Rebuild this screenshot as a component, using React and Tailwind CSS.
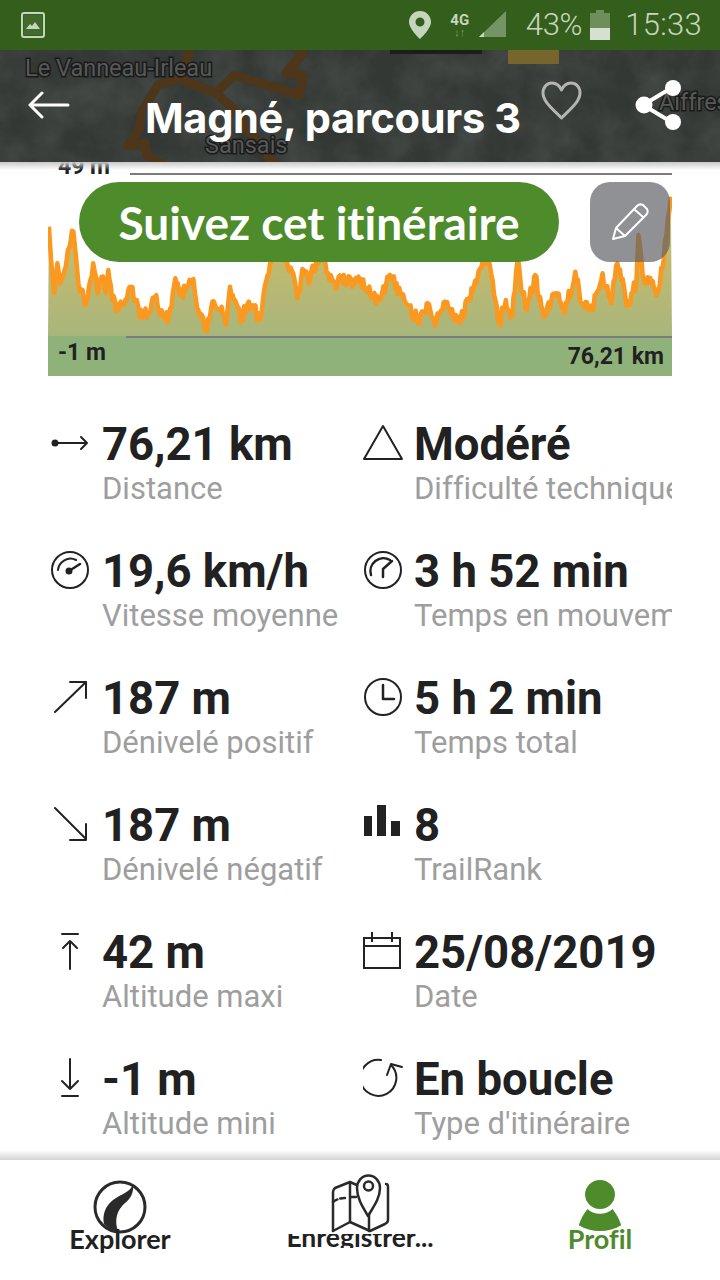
import React from "react";

// profile outline read off the screenshot (x, y in chart px)
const keys = [[45,200],[50,300],[58,400],[65,310],[72,370],[85,320],[90,270],[103,215],[110,300],[115,370],[125,390],[130,435],[140,380],[150,310],[160,400],[170,350],[180,400],[186,330],[195,420],[210,450],[230,420],[240,380],[250,420],[260,470],[280,460],[300,405],[310,465],[330,470],[345,355],[360,400],[385,360],[400,450],[420,515],[430,445],[455,440],[465,495],[475,380],[490,430],[500,485],[520,425],[548,480],[555,400],[570,310],[580,250],[610,300],[625,340],[635,415],[650,330],[665,360],[680,300],[690,280],[705,340],[730,370],[745,345],[765,380],[780,350],[800,395],[830,420],[855,345],[880,400],[925,490],[945,430],[965,485],[985,425],[1020,490],[1040,420],[1060,370],[1075,300],[1090,300],[1105,420],[1115,490],[1130,420],[1145,470],[1158,300],[1170,400],[1180,450],[1200,345],[1220,470],[1250,400],[1270,460],[1295,335],[1310,430],[1335,450],[1360,340],[1380,430],[1395,310],[1420,435],[1440,370],[1445,225],[1455,340],[1470,370],[1490,395],[1505,300],[1522,110]];

let seed = 17;
const rnd = () => {
  seed = (seed * 1103 + 12345) % 65536;
  return seed / 65536;
};

const line = [];
keys.forEach(([zx, zy], i) => {
  const x = zx / 2.375 - 18;
  const y = zy / 3 - 2;
  line.push([x, y]);
  const next = keys[i + 1];
  if (next && next[0] - zx > 8) {
    const nx = next[0] / 2.375 - 18;
    const ny = next[1] / 3 - 2;
    const steps = Math.max(2, Math.floor((nx - x) / 1.2));
    for (let s = 1; s < steps; s++) {
      const t = s / steps;
      line.push([x + (nx - x) * t, y + (ny - y) * t + (rnd() - 0.5) * 14]);
    }
  }
});
const lineD = line.map(([x, y], i) => `${i ? "L" : "M"}${x.toFixed(1)} ${y.toFixed(1)}`).join(" ");
const fillD = `${lineD} L624 174 L0 174 Z`;

const stats = [
  ["dist", "76,21 km", "Distance", "time", "Modéré", "Difficulté technique"],
  ["gauge", "19,6 km/h", "Vitesse moyenne", "gauge2", "3 h 52 min", "Temps en mouvement"],
  ["up", "187 m", "Dénivelé positif", "clock", "5 h 2 min", "Temps total"],
  ["down", "187 m", "Dénivelé négatif", "bars", "8", "TrailRank"],
  ["max", "42 m", "Altitude maxi", "cal", "25/08/2019", "Date"],
  ["min", "-1 m", "Altitude mini", "loop", "En boucle", "Type d'itinéraire"],
];

function StatIcon({ name }) {
  const common = { fill: "none", stroke: "#222", strokeWidth: 2, strokeLinecap: "round", strokeLinejoin: "round" };
  return (
    <svg width="44" height="44" viewBox="0 0 44 44" className="shrink-0">
      {name === "dist" && (
        <g {...common}>
          <circle cx="7" cy="22" r="2.500" fill="#222" />
          <path d="M7 22h32M33 16l6 6-6 6" />
        </g>
      )}
      {name === "time" && <path {...common} d="M20 5 L39 38 H1 Z" />}
      {name === "gauge" && (
        <g {...common}>
          <circle cx="22" cy="22" r="18" />
          <path d="M10 22a12.500 12.500 0 0 1 18-10" />
          <circle cx="21" cy="23" r="2.500" fill="#222" />
          <path d="M21 23l11-7" strokeWidth="2.500" />
        </g>
      )}
      {name === "gauge2" && (
        <g {...common}>
          <circle cx="20" cy="22" r="18" />
          <path d="M8 27a13 13 0 0 1 19-15" strokeWidth="2.500" />
          <path d="M20 29v-8l9-8" strokeWidth="2.500" />
        </g>
      )}
      {name === "up" && <path {...common} d="M7 37 L38 7 M22 7h16v16" />}
      {name === "clock" && (
        <g {...common}>
          <circle cx="20" cy="22" r="18" />
          <path d="M20 10v14h11" strokeWidth="2.500" />
        </g>
      )}
      {name === "down" && <path {...common} d="M7 6 L38 37 M22 38h16V22" />}
      {name === "bars" && (
        <g fill="#222">
          <rect x="1" y="14" width="8" height="20" />
          <rect x="14" y="3" width="9" height="31" />
          <rect x="28" y="19" width="9" height="15" />
        </g>
      )}
      {name === "max" && <path {...common} d="M14 5h16M22 40V12M15 19l7-7 7 7" />}
      {name === "min" && <path {...common} d="M22 3v30M14 25l8 8 8-8M14 40h16" />}
      {name === "cal" && (
        <g {...common} strokeLinecap="butt" strokeLinejoin="miter">
          <rect x="1" y="9" width="36" height="30" />
          <path d="M1 17h36M9 3v10M29 3v10" />
        </g>
      )}
      {name === "loop" && (
        <g {...common}>
          <path d="M18 4A18 18 0 1 0 28 9" />
          <path d="M24 19l4-11 11 3" />
        </g>
      )}
    </svg>
  );
}

function Stat({ icon, value, label, right }) {
  return (
    <div className="flex h-[127px] min-w-0 items-start">
      <div className={`mt-[11px] w-[54px] shrink-0 ${right ? "pl-[3px]" : ""}`}>
        <StatIcon name={icon} />
      </div>
      <div className="min-w-0 flex-1 overflow-hidden whitespace-nowrap pt-[10px]">
        <div className="h-[50px] text-[45.500px] leading-[50px] font-bold text-[#212121]">{value}</div>
        <div className="-mt-[1px] text-[31px] leading-[40px] text-[#9e9e9e]">{label}</div>
      </div>
    </div>
  );
}

function MapBackground() {
  const label = { fontFamily: "Roboto, sans-serif", fontSize: 23.5, fill: "#585858", stroke: "#191b1a", strokeWidth: 3, paintOrder: "stroke" };
  return (
    <svg className="absolute inset-0" width="720" height="112" viewBox="0 50 720 112">
      <defs>
        <filter id="sat" x="0" y="0" width="100%" height="100%">
          <feTurbulence type="fractalNoise" baseFrequency="0.025" numOctaves="5" seed="5" />
          <feColorMatrix values="0 0 0 0 0.09  0 0 0 0 0.11  0 0 0 0 0.1  1.2 0 0 0 -0.35" />
        </filter>
      </defs>
      <rect x="0" y="50" width="720" height="112" fill="#343835" />
      <rect x="0" y="50" width="720" height="112" filter="url(#sat)" opacity="0.7" />
      <rect x="390" y="50" width="92" height="4" fill="#1c1e1c" />
      <rect x="508" y="50" width="51" height="14" fill="#77662c" />
      <g fill="none" stroke="#4d3619" strokeWidth="9" strokeLinejoin="round">
        <path d="M190 50 L181 78 L158 85 L141 113 L140 128 L128 146 L145 143 L147 156 L165 166" />
        <path d="M181 80 L216 93 L234 75 L300 95 L303 75 L286 73 L303 53 L298 48" />
        <path d="M216 93 L238 113 L250 133 L275 165" />
      </g>
      <text x="25" y="76" style={label}>Le Vanneau-Irleau</text>
      <text x="205" y="153" style={label}>Sansais</text>
      <text x="659" y="110" style={label}>Aiffres</text>
    </svg>
  );
}

function StatusBar() {
  return (
    <div className="flex h-[50px] shrink-0 items-center bg-[#345e1b] pl-[21px] pr-[18px] text-[31px] font-light text-[#c6d6bd]">
      <svg width="24" height="26" viewBox="0 0 24 26">
        <rect x="1" y="1" width="22" height="24" rx="2" fill="none" stroke="#c6d6bd" strokeWidth="2" />
        <rect x="3" y="3" width="18" height="20" fill="#c6d6bd" fillOpacity="0.1" />
        <path d="M5 17l4-5 2 2 3-4 5 7z" fill="#c6d6bd" />
      </svg>
      <div className="flex-1" />
      <svg width="22" height="28" viewBox="0 0 22 28">
        <path fillRule="evenodd" d="M11 0C4.900 0 0 4.900 0 11c0 7 11 17 11 17s11-10 11-17C22 4.900 17.100 0 11 0zm0 15.500a4.500 4.500 0 1 1 0-9 4.500 4.500 0 0 1 0 9z" fill="#c6d6bd" />
      </svg>
      <div className="ml-[18px] flex w-[22px] flex-col items-center text-[15px] leading-[16px] font-bold">
        4G
        <span className="text-[11px] leading-[10px] opacity-50">↓↑</span>
      </div>
      <svg className="ml-[8px]" width="28" height="28" viewBox="0 0 28 28">
        <path d="M27 0v26H0z" fill="#c6d6bd" fillOpacity="0.45" />
        <path d="M0 26l5-5v5z" fill="#c6d6bd" />
      </svg>
      <span className="ml-[19px] tracking-[-0.3px]">43%</span>
      <svg className="ml-[8px]" width="20" height="30" viewBox="0 0 20 30">
        <path d="M6 0h8v3h6v27H0V3h6z" fill="#c6d6bd" fillOpacity="0.4" />
        <rect x="0" y="18" width="20" height="12" fill="#d5e0cf" />
      </svg>
      <span className="ml-[15px] tracking-[0.3px]">15:33</span>
    </div>
  );
}

function Header() {
  return (
    <div className="relative z-10 h-[112px] shrink-0 overflow-hidden bg-[#272c29]">
      <MapBackground />
      <div className="relative flex h-full items-start">
        <svg className="ml-[28px] mt-[40px] shrink-0" width="42" height="30" viewBox="0 0 42 30">
          <path d="M40 15H2M14 3L2 15l12 12" fill="none" stroke="#fff" strokeWidth="3" strokeLinecap="round" strokeLinejoin="round" />
        </svg>
        <div className="ml-[75px] mt-[44px] w-[396px] shrink-0 whitespace-nowrap text-[41.500px] leading-[48px] font-bold tracking-[-0.3px] text-white" style={{ fontFamily: "Inter, sans-serif" }}>
          Magné, parcours 3
        </div>
        <svg className="absolute left-[541px] top-[31px]" width="41" height="40" viewBox="0 0 41 40">
          <path d="M20.500 37C13 29 2 21 2 12 2 6 6 2 11 2c4 0 7.500 2.500 9.500 7 2-4.500 5.500-7 9.500-7 5 0 9 4 9 10 0 9-11 17-18.500 25z" fill="none" stroke="#b4b4b4" strokeWidth="3" strokeLinejoin="round" />
        </svg>
        <svg className="absolute left-[635px] top-[29px]" width="48" height="52" viewBox="0 0 48 52">
          <path d="M38 8L8 26l30 18" fill="none" stroke="#fff" strokeWidth="4" />
          <circle cx="38" cy="9" r="8" fill="#fff" />
          <circle cx="9" cy="26" r="8.500" fill="#fff" />
          <circle cx="38" cy="43" r="8" fill="#fff" />
        </svg>
      </div>
    </div>
  );
}

function Chart() {
  return (
    <div className="relative mx-[48px] h-[214px] w-[624px] shrink-0">
      <svg className="block" width="624" height="214" viewBox="0 0 624 214">
        <defs>
          <linearGradient id="area" x1="0" y1="0" x2="0" y2="1">
            <stop offset="0" stopColor="#d6bd62" />
            <stop offset="1" stopColor="#a8b67c" />
          </linearGradient>
        </defs>
        <rect x="0" y="174" width="624" height="40" fill="#8fb27b" />
        <path d={fillD} fill="url(#area)" />
        <path d={lineD} fill="none" stroke="#fb981f" strokeWidth="4.500" strokeLinejoin="round" />
        <rect x="82" y="11" width="542" height="2" fill="#7c7c7c" />
        <rect x="78" y="174" width="546" height="2" fill="#7a7a80" />
      </svg>
      <div className="absolute -top-[8px] left-[10px] text-[23px] leading-[26px] font-bold text-[#212121]">49 m</div>
      <div className="absolute bottom-[10px] left-[10px] text-[23px] leading-[26px] font-bold text-[#212121]">-1 m</div>
      <div className="absolute bottom-[6px] right-[8px] text-[23px] leading-[26px] font-bold text-[#212121]">76,21 km</div>
      <div className="absolute left-[31px] top-[20px] flex h-[80px] w-[480px] items-center justify-center rounded-[40px] bg-[#4e8b2b] text-[46px] font-bold text-white" style={{ fontFamily: "Lato, sans-serif" }}>
        Suivez cet itinéraire
      </div>
      <div className="absolute left-[542px] top-[20px] flex h-[80px] w-[80px] items-center justify-center rounded-[20px] bg-[#5f6366]/70">
        <svg width="40" height="38" viewBox="0 0 40 38">
          <path d="M3 36l3-11L27 3c2-2 4-2 6-1l4 4c1 2 1 4-1 6L15 33zM6 25l9 8M24 6l9 8" fill="none" stroke="#fff" strokeWidth="2" strokeLinejoin="round" />
        </svg>
      </div>
    </div>
  );
}

function BottomNav() {
  return (
    <div className="relative z-10 grid h-[120px] shrink-0 grid-cols-3 bg-white font-bold" style={{ fontFamily: "Lato, sans-serif" }}>
      <div className="absolute -top-[10px] left-0 h-[10px] w-full bg-gradient-to-b from-transparent to-[#d4d4d4]" />
      <div className="flex flex-col items-center pt-[20px] text-[#212121]">
        <svg width="54" height="54" viewBox="0 0 54 54" className="shrink-0">
          <circle cx="27" cy="27" r="25" fill="none" stroke="#2a2a2a" strokeWidth="3" />
          <path d="M40 4C38 12 28 14 20 20 12 26 9 36 11 44L19 51 25 51C21 40 24 30 32 23 37 19 41 14 40 4Z" fill="#2a2a2a" />
        </svg>
        <div className="-mt-[8px] text-[27px] leading-[26px]">Explorer</div>
      </div>
      <div className="flex flex-col items-center pt-[14px] text-[#212121]">
        <svg width="60" height="60" viewBox="0 0 60 60" className="relative z-10 shrink-0">
          <g fill="none" stroke="#2a2a2a" strokeWidth="2.500" strokeLinecap="round" strokeLinejoin="round">
            <path d="M3 57V18c0-2 1-3 2-4l15-6 9 4" />
            <path d="M3 57l17-9 20 9 15-7c2-1 3-2 3-4V13c0-2-1-3-2-3" />
            <path d="M20 9v39" />
            <path d="M39 40v17" />
            <path d="M3 28c4-3 8-4 12-4M21 23h7M32 25l7 4" strokeDasharray="5 3" />
            <path d="M38 42C32 32 27 24 27 14a11.500 12.500 0 0 1 23 0c0 10-6 18-12 28z" fill="#fff" />
            <circle cx="38.500" cy="12" r="4.500" />
          </g>
        </svg>
        <div className="h-[14px] overflow-hidden whitespace-nowrap text-[26.500px] leading-[6px]">Enregistrer...</div>
      </div>
      <div className="flex flex-col items-center pt-[20px] text-[#4e8b2b]">
        <svg width="46" height="52" viewBox="0 0 46 54" className="shrink-0">
          <ellipse cx="23" cy="15" rx="15.500" ry="15" fill="#4e8b2b" />
          <path d="M10 30c3 3 8 5 13 5s10-2 13-5c4 5 7 10 9 17-6 4-14 6-22 6S7 51 1 47c2-7 5-12 9-17z" fill="#4e8b2b" />
        </svg>
        <div className="-mt-[6px] text-[27px] leading-[26px]">Profil</div>
      </div>
    </div>
  );
}

export default function App() {
  return (
    <div className="flex h-[1280px] w-[720px] flex-col overflow-hidden bg-white [font-variant-ligatures:none]" style={{ fontFamily: "Roboto, sans-serif" }}>
      <StatusBar />
      <Header />
      <div className="relative min-h-0 flex-1 overflow-hidden">
        <div className="absolute left-0 top-0 z-10 h-[8px] w-full bg-gradient-to-b from-[#c8c8c8] to-transparent" />
        <Chart />
        <div className="mx-[48px] mt-[34px] grid w-[624px] grid-cols-[312px_312px]">
          {stats.map((s) => (
            <React.Fragment key={s[2]}>
              <Stat icon={s[0]} value={s[1]} label={s[2]} />
              <Stat icon={s[3]} value={s[4]} label={s[5]} right />
            </React.Fragment>
          ))}
        </div>
      </div>
      <BottomNav />
    </div>
  );
}
